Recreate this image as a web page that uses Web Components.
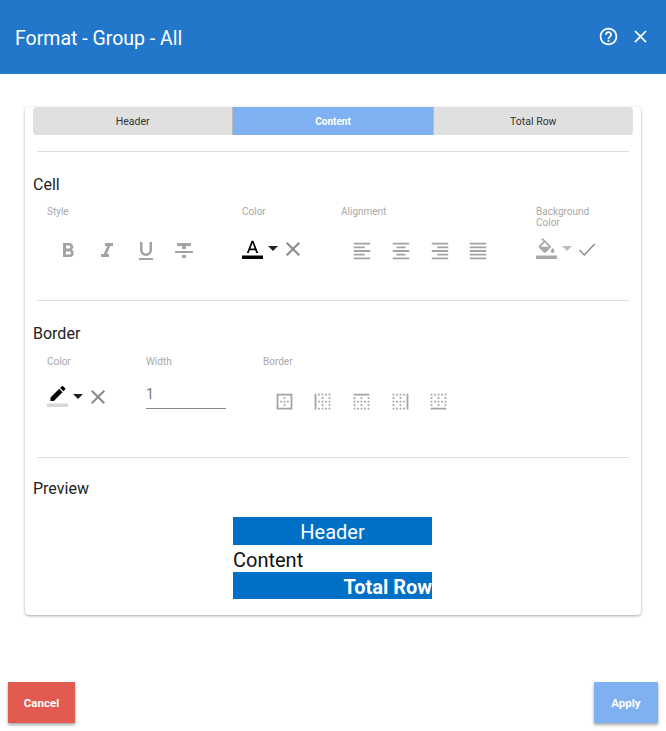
<!DOCTYPE html>
<html>
<head>
<meta charset="utf-8">
<title>Format - Group - All</title>
<style>
  html, body { margin: 0; padding: 0; background: #fff; font-family: Roboto, "Liberation Sans", sans-serif; }
</style>
</head>
<body>
<format-dialog></format-dialog>

<script>
const ICONS = {
    bold: '<path d="M15.6 10.79c.97-.67 1.65-1.77 1.65-2.79 0-2.26-1.75-4-4-4H7v14h7.04c2.09 0 3.71-1.7 3.71-3.79 0-1.52-.86-2.82-2.15-3.42zM10 6.5h3c.83 0 1.5.67 1.5 1.5s-.67 1.5-1.5 1.5h-3v-3zm3.5 9H10v-3h3.5c.83 0 1.5.67 1.5 1.5s-.67 1.5-1.5 1.5z"/>',
    italic: '<path d="M10 4v3h2.21l-3.42 8H6v3h8v-3h-2.21l3.42-8H18V4z"/>',
    underline: '<path d="M12 17c3.31 0 6-2.69 6-6V3h-2.5v8c0 1.93-1.57 3.5-3.5 3.5S8.5 12.93 8.5 11V3H6v8c0 3.31 2.69 6 6 6zm-7 2v2h14v-2H5z"/>',
    strike: '<path d="M10 19h4v-3h-4v3zM5 4v3h5v3h4V7h5V4H5zM3 14h18v-2H3v2z"/>',
    alignLeft: '<path d="M15 15H3v2h12v-2zm0-8H3v2h12V7zM3 13h18v-2H3v2zm0 8h18v-2H3v2zM3 3v2h18V3H3z"/>',
    alignCenter: '<path d="M7 15v2h10v-2H7zm-4 6h18v-2H3v2zm0-8h18v-2H3v2zm4-6v2h10V7H7zM3 3v2h18V3H3z"/>',
    alignRight: '<path d="M3 21h18v-2H3v2zm6-4h12v-2H9v2zm-6-4h18v-2H3v2zm6-4h12V7H9v2zM3 3v2h18V3H3z"/>',
    alignJustify: '<path d="M3 21h18v-2H3v2zm0-4h18v-2H3v2zm0-4h18v-2H3v2zm0-4h18V7H3v2zm0-6v2h18V3H3z"/>',
    textColor: '<path d="M11 3L5.5 17h2.25l1.12-3h6.25l1.12 3h2.25L13 3h-2zm-1.38 9L12 5.67 14.38 12H9.62z"/><path d="M0 20h24v4H0z"/>',
    fillColor: '<path d="M16.56 8.94L7.62 0 6.21 1.41l2.38 2.38-5.15 5.15c-.59.59-.59 1.54 0 2.12l5.5 5.5c.29.29.68.44 1.06.44s.77-.15 1.06-.44l5.5-5.5c.59-.58.59-1.53 0-2.12zM5.21 10L10 5.21 14.79 10H5.21zM19 11.5s-2 2.17-2 3.5c0 1.1.9 2 2 2s2-.9 2-2c0-1.33-2-3.5-2-3.5z"/><path d="M0 20h24v4H0z"/>',
    borderColor: '<path d="M17.75 7L14 3.25l-10 10V17h3.75l10-10zm2.96-2.96c.39-.39.39-1.02 0-1.41L18.37.29c-.39-.39-1.02-.39-1.41 0L15 2.25 18.75 6l1.96-1.96z"/><path fill="#d6d9dc" d="M0 20h24v4H0z"/>',
    drop: '<path d="M7 10l5 5 5-5z"/>',
    clear: '<path d="M19 6.41L17.59 5 12 10.59 6.41 5 5 6.41 10.59 12 5 17.59 6.41 19 12 13.41 17.59 19 19 17.59 13.41 12z"/>',
    check: '<path d="M4.5 13l4.8 5L19.7 7" fill="none" stroke="currentColor" stroke-width="1.4"/>',
    help: '<path d="M11 18h2v-2h-2v2zm1-16C6.48 2 2 6.48 2 12s4.48 10 10 10 10-4.48 10-10S17.52 2 12 2zm0 18c-4.41 0-8-3.59-8-8s3.59-8 8-8 8 3.59 8 8-3.59 8-8 8zm0-14c-2.21 0-4 1.79-4 4h2c0-1.1.9-2 2-2s2 .9 2 2c0 2-3 1.75-3 5h2c0-2.25 3-2.5 3-5 0-2.21-1.79-4-4-4z"/>',
    borderOuter: '<path d="M13 7h-2v2h2V7zm0 4h-2v2h2v-2zm4 0h-2v2h2v-2zM3 3v18h18V3H3zm16 16H5V5h14v14zm-6-4h-2v2h2v-2zm-4-4H7v2h2v-2z"/>',
    borderLeft: '<path d="M11 21h2v-2h-2v2zm0-4h2v-2h-2v2zm0-12h2V3h-2v2zm0 4h2V7h-2v2zm0 4h2v-2h-2v2zm-4 8h2v-2H7v2zM7 5h2V3H7v2zm0 8h2v-2H7v2zm-4 8h2V3H3v18zM19 9h2V7h-2v2zm-4 12h2v-2h-2v2zm4-4h2v-2h-2v2zm0-14v2h2V3h-2zm0 10h2v-2h-2v2zm0 8h2v-2h-2v2zm-4-8h2v-2h-2v2zm0-8h2V3h-2v2z"/>',
    borderTop: '<path d="M7 21h2v-2H7v2zm0-8h2v-2H7v2zm4 0h2v-2h-2v2zm0 8h2v-2h-2v2zm-8-4h2v-2H3v2zm0 4h2v-2H3v2zm0-8h2v-2H3v2zm0-4h2V7H3v2zm8 8h2v-2h-2v2zm8-8h2V7h-2v2zm0 4h2v-2h-2v2zM3 3v2h18V3H3zm16 14h2v-2h-2v2zm-4 4h2v-2h-2v2zM11 9h2V7h-2v2zm8 12h2v-2h-2v2zm-4-8h2v-2h-2v2z"/>',
    borderRight: '<path d="M7 21h2v-2H7v2zM3 5h2V3H3v2zm4 0h2V3H7v2zm0 8h2v-2H7v2zm-4 8h2v-2H3v2zm8 0h2v-2h-2v2zm-8-8h2v-2H3v2zm0 4h2v-2H3v2zm0-8h2V7H3v2zm8 8h2v-2h-2v2zm4-4h2v-2h-2v2zm4-10v18h2V3h-2zm-4 18h2v-2h-2v2zm0-16h2V3h-2v2zm-4 8h2v-2h-2v2zm0-8h2V3h-2v2zm0 4h2V7h-2v2z"/>',
    borderBottom: '<path d="M9 11H7v2h2v-2zm4 4h-2v2h2v-2zM9 3H7v2h2V3zm4 8h-2v2h2v-2zM5 3H3v2h2V3zm8 4h-2v2h2V7zm4 4h-2v2h2v-2zm-4-8h-2v2h2V3zm4 0h-2v2h2V3zm2 10h2v-2h-2v2zm0 4h2v-2h-2v2zM5 7H3v2h2V7zm14-4v2h2V3h-2zm0 6h2V7h-2v2zM5 11H3v2h2v-2zM3 21h18v-2H3v2zm2-6H3v2h2v-2z"/>'
};

class FmtIcon extends HTMLElement {
    connectedCallback() {
        const size = this.getAttribute("size") || 24;
        const name = this.getAttribute("name");
        this.attachShadow({ mode: "open" }).innerHTML = `
            <style>
                :host { display: inline-flex; color: inherit; line-height: 0; }
                svg { fill: currentColor; display: block; overflow: hidden; }
            </style>
            <svg width="${size}" height="${size}" viewBox="0 0 24 24">${ICONS[name]}</svg>
        `;
    }
}

class FmtTabs extends HTMLElement {
    connectedCallback() {
        this.attachShadow({ mode: "open" }).innerHTML = `
            <style>
                :host { display: flex; height: 28px; background: #e0e0e0; border-radius: 4px; overflow: hidden; }
                div {
                    flex: 1 1 0;
                    box-sizing: border-box;
                    display: flex;
                    align-items: center;
                    justify-content: center;
                    font-size: 10.5px;
                    color: #333;
                }
                div:not(:last-child) { border-right: 1px solid #b9bdc2; }
                .active { background: #7fb0f2; color: #fff; font-weight: 700; font-size: 10px; }
            </style>
            <div>Header</div>
            <div class="active">Content</div>
            <div>Total Row</div>
        `;
    }
}

class FmtSection extends HTMLElement {
    connectedCallback() {
        const h = this.getAttribute("height");
        this.attachShadow({ mode: "open" }).innerHTML = `
            <style>
                :host { display: block; height: ${h}px; box-sizing: border-box; }
                hr { border: 0; border-top: 1px solid #dedede; margin: 0 4px; }
                h3 { margin: var(--head-top, 23px) 0 0; font-size: 16px; line-height: 20px; font-weight: 400; color: #222; }
                .body { display: flex; padding: var(--body-pad, 11px 0 0 14px); }
            </style>
            <hr>
            <h3>${this.getAttribute("heading")}</h3>
            <div class="body"><slot></slot></div>
        `;
    }
}

class FmtField extends HTMLElement {
    connectedCallback() {
        const label = this.getAttribute("label");
        this.attachShadow({ mode: "open" }).innerHTML = `
            <style>
                :host { display: block; width: ${this.getAttribute("width") || 99}px; }
                .label { font-size: 10px; line-height: 11px; height: 33px; color: #a8a8a8; width: 62px; }
                :host([wide]) .label { width: auto; }
                .row { display: flex; align-items: center; height: 24px; }
            </style>
            <div class="label">${label}</div>
            <div class="row"><slot></slot></div>
        `;
    }
}

class FmtIconRow extends HTMLElement {
    connectedCallback() {
        const names = this.getAttribute("names").split(",");
        const size = this.getAttribute("size") || 24;
        this.attachShadow({ mode: "open" }).innerHTML = `
            <style>
                :host { display: flex; padding-left: 2px; color: #a3a3a3; }
                span { width: 38.67px; display: flex; justify-content: center; }
            </style>
            ${names.map(n => `<span><fmt-icon name="${n}" size="${size}"></fmt-icon></span>`).join("")}
        `;
    }
}

class FmtColorPick extends HTMLElement {
    connectedCallback() {
        const tail = this.getAttribute("tail");
        const color = this.getAttribute("color") || "#000";
        const arrow = this.getAttribute("arrow") || "#222";
        this.attachShadow({ mode: "open" }).innerHTML = `
            <style>
                :host { display: flex; align-items: center; margin-top: -4px; }
                .swatch { color: ${color}; display: flex; margin-top: -2px; }
                .arrow { color: ${arrow}; display: flex; margin: -3px -4px 0 -2px; }
                .tail { color: #8a8a8a; display: flex; }
            </style>
            <span class="swatch"><fmt-icon name="${this.getAttribute("icon")}" size="21"></fmt-icon></span>
            <span class="arrow"><fmt-icon name="drop" size="24"></fmt-icon></span>
            <span class="tail"><fmt-icon name="${tail}" size="24"></fmt-icon></span>
        `;
    }
}

class FmtPreview extends HTMLElement {
    connectedCallback() {
        this.attachShadow({ mode: "open" }).innerHTML = `
            <style>
                :host { display: block; width: 199px; margin: 18px 0 0 200px; font-size: 20px; }
                div { height: 27px; line-height: 31px; white-space: nowrap; }
                .head { height: 28px; line-height: 30px; background: #0070c6; color: #fff; text-align: center; }
                .content { color: #111; }
                .total { background: #0070c6; color: #fff; font-weight: 700; text-align: right; }
            </style>
            <div class="head">Header</div>
            <div class="content">Content</div>
            <div class="total">Total Row</div>
        `;
    }
}

class FormatDialog extends HTMLElement {
    connectedCallback() {
        this.attachShadow({ mode: "open" }).innerHTML = `
            <style>
                :host { display: flex; flex-direction: column; height: 100vh; background: #fff; }
                header {
                    height: 74px;
                    flex: none;
                    background: #2277ca;
                    color: #fff;
                    display: flex;
                    align-items: center;
                    padding: 0 15px 0 15px;
                    gap: 11px;
                }
                header h1 { margin: 2px auto 0 0; font-size: 19.5px; font-weight: 400; }
                header fmt-icon { margin-top: -2px; }
                main { flex: 1; padding: 33px 25px 0; }
                .card {
                    background: #fff;
                    height: 508px;
                    box-sizing: border-box;
                    padding: 0 8px;
                    border-radius: 4px;
                    box-shadow: 0 1px 3px rgba(0,0,0,.35);
                }
                fmt-tabs { margin-bottom: 16px; }
                input {
                    width: 80px;
                    height: 26px;
                    box-sizing: border-box;
                    border: 0;
                    border-bottom: 1px solid #888;
                    outline: 0;
                    padding: 0 0 4px;
                    margin: -2px 0 8px;
                    font: 14px Roboto, sans-serif;
                    color: #777;
                }
                footer { display: flex; justify-content: space-between; padding: 0 8px 8px; }
                button {
                    height: 41px;
                    border: 0;
                    color: #fff;
                    font: 700 11.5px Roboto, sans-serif;
                    box-shadow: 0 2px 3px rgba(0,0,0,.35);
                }
                .cancel { width: 67px; background: #e25950; }
                .apply { width: 64px; background: #7fb0f2; }
            </style>
            <header>
                <h1>Format - Group - All</h1>
                <fmt-icon name="help" size="21"></fmt-icon>
                <fmt-icon name="clear" size="21"></fmt-icon>
            </header>
            <main>
                <div class="card">
                    <fmt-tabs></fmt-tabs>
                    <fmt-section heading="Cell" height="149">
                        <fmt-field label="Style" width="195"><fmt-icon-row names="bold,italic,underline,strike"></fmt-icon-row></fmt-field>
                        <fmt-field label="Color" width="99"><fmt-color-pick icon="textColor" tail="clear"></fmt-color-pick></fmt-field>
                        <fmt-field label="Alignment" width="195" wide><fmt-icon-row names="alignLeft,alignCenter,alignRight,alignJustify" size="22"></fmt-icon-row></fmt-field>
                        <fmt-field label="Background Color" width="80"><fmt-color-pick icon="fillColor" tail="check" color="#a8a8a8" arrow="#bdbdbd"></fmt-color-pick></fmt-field>
                    </fmt-section>
                    <fmt-section heading="Border" height="157" style="--body-pad:12px 0 0 14px">
                        <fmt-field label="Color" width="99"><fmt-color-pick icon="borderColor" tail="clear" style="margin-top:-8px"></fmt-color-pick></fmt-field>
                        <fmt-field label="Width" width="117"><input value="1"></fmt-field>
                        <fmt-field label="Border" width="200"><fmt-icon-row names="borderOuter,borderLeft,borderTop,borderRight,borderBottom" size="21"></fmt-icon-row></fmt-field>
                    </fmt-section>
                    <fmt-section heading="Preview" height="150" style="--body-pad:0;--head-top:21px">
                        <fmt-preview></fmt-preview>
                    </fmt-section>
                </div>
            </main>
            <footer>
                <button class="cancel">Cancel</button>
                <button class="apply">Apply</button>
            </footer>
        `;
    }
}

customElements.define("fmt-icon", FmtIcon);
customElements.define("fmt-tabs", FmtTabs);
customElements.define("fmt-section", FmtSection);
customElements.define("fmt-field", FmtField);
customElements.define("fmt-icon-row", FmtIconRow);
customElements.define("fmt-color-pick", FmtColorPick);
customElements.define("fmt-preview", FmtPreview);
customElements.define("format-dialog", FormatDialog);
</script>
</body>
</html>
